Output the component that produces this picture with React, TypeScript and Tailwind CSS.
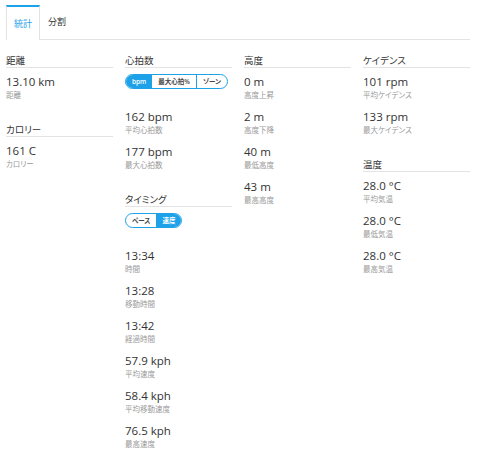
import React from 'react';

const jp = "font-['Open_Sans','Noto_Sans_CJK_JP',sans-serif] [font-feature-settings:'palt']";

type Stat = { value: string; label: string };

const Header = ({ title }: { title: string }) => (
  <h3 className="text-[9.5px] leading-[12px] text-[#333] border-b border-[#e3e3e3]">{title}</h3>
);

const StatRow = ({ stat }: { stat: Stat }) => (
  <div className="mb-[8px]">
    <div className="text-[11.5px] leading-[16px] text-[#333]">{stat.value}</div>
    <div className="text-[7.5px] leading-[11px] text-[#999]">{stat.label}</div>
  </div>
);

const Toggle = ({ items, active }: { items: string[]; active: number }) => (
  <div className="flex">
    <div className="flex shrink-0 h-[15px] rounded-full border border-[#1da1e8] overflow-hidden">
      {items.map((item, i) => (
        <span
          key={item}
          className={
            'px-[6px] whitespace-nowrap text-[6.5px] leading-[13px] font-semibold ' +
            (i === active ? 'bg-[#1da1e8] text-white' : 'text-[#444]') +
            (i > 0 && i !== active && i - 1 !== active ? ' border-l border-[#1da1e8]' : '')
          }
        >
          {item}
        </span>
      ))}
    </div>
  </div>
);

const Section = ({ title, stats, toggle }: { title: string; stats: Stat[]; toggle?: React.ReactNode }) => (
  <section className="mb-[23px]">
    <Header title={title} />
    {toggle && <div className="mt-[6px] mb-[20px]">{toggle}</div>}
    <div className={toggle ? '' : 'mt-[6px]'}>
      {stats.map((s) => (
        <StatRow key={s.label} stat={s} />
      ))}
    </div>
  </section>
);

export default function App() {
  return (
    <div className={'w-[480px] h-[455px] bg-white pl-[6px] pr-[10px] pt-[5px] overflow-hidden ' + jp}>
      <div className="flex border-b border-[#e3e3e3] h-[35px]">
        <div className="w-[34px] h-[35px] -mb-px bg-white border-t-2 border-t-[#1da1e8] border-x border-x-[#e3e3e3] flex items-center justify-center text-[9px] text-[#1da1e8]">
          統計
        </div>
        <div className="px-[8px] flex items-center text-[9px] text-[#333]">分割</div>
      </div>

      <div className="grid grid-cols-4 gap-x-[12px] mt-[15px]">
        <div>
          <Section title="距離" stats={[{ value: '13.10 km', label: '距離' }]} />
          <Section title="カロリー" stats={[{ value: '161 C', label: 'カロリー' }]} />
        </div>
        <div>
          <Section
            title="心拍数"
            toggle={<Toggle items={['bpm', '最大心拍%', 'ゾーン']} active={0} />}
            stats={[
              { value: '162 bpm', label: '平均心拍数' },
              { value: '177 bpm', label: '最大心拍数' },
            ]}
          />
          <Section
            title="タイミング"
            toggle={<Toggle items={['ペース', '速度']} active={1} />}
            stats={[
              { value: '13:34', label: '時間' },
              { value: '13:28', label: '移動時間' },
              { value: '13:42', label: '経過時間' },
              { value: '57.9 kph', label: '平均速度' },
              { value: '58.4 kph', label: '平均移動速度' },
              { value: '76.5 kph', label: '最高速度' },
            ]}
          />
        </div>
        <div>
          <Section
            title="高度"
            stats={[
              { value: '0 m', label: '高度上昇' },
              { value: '2 m', label: '高度下降' },
              { value: '40 m', label: '最低高度' },
              { value: '43 m', label: '最高高度' },
            ]}
          />
        </div>
        <div>
          <Section
            title="ケイデンス"
            stats={[
              { value: '101 rpm', label: '平均ケイデンス' },
              { value: '133 rpm', label: '最大ケイデンス' },
            ]}
          />
          <Section
            title="温度"
            stats={[
              { value: '28.0 °C', label: '平均気温' },
              { value: '28.0 °C', label: '最低気温' },
              { value: '28.0 °C', label: '最高気温' },
            ]}
          />
        </div>
      </div>
    </div>
  );
}
